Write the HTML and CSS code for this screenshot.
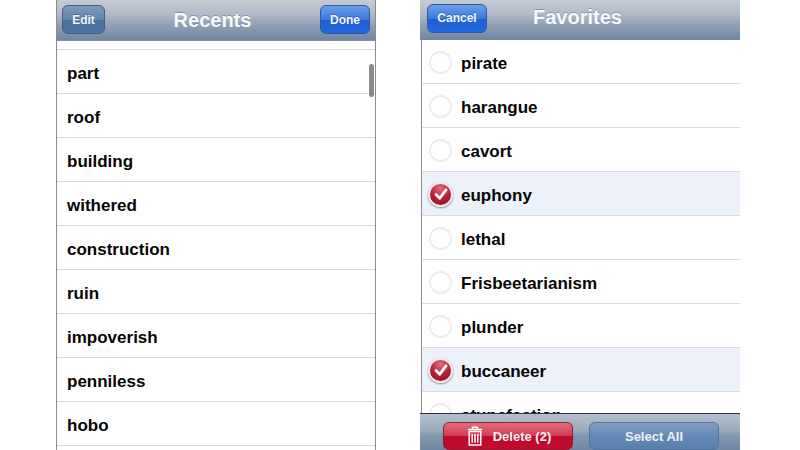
FILE: index.html
```html
<!DOCTYPE html>
<html lang="en">
<head>
<meta charset="utf-8">
<title>Recents and Favorites</title>
<link rel="stylesheet" href="styles.css">
</head>
<body>
<div class="stage">
  <section class="phone phone-left">
    <header class="nav nav-left">
      <button class="btn btn-slate btn-edit">Edit</button>
      <h1 class="title">Recents</h1>
      <button class="btn btn-blue btn-done">Done</button>
    </header>
    <div class="list list-left">
      <div class="scrollbar"></div>
      <div class="spacer"></div>
      <div class="row">part</div>
      <div class="row">roof</div>
      <div class="row">building</div>
      <div class="row">withered</div>
      <div class="row">construction</div>
      <div class="row">ruin</div>
      <div class="row">impoverish</div>
      <div class="row">penniless</div>
      <div class="row">hobo</div>
    </div>
  </section>
  <section class="phone phone-right">
    <header class="nav nav-right">
      <button class="btn btn-blue btn-cancel">Cancel</button>
      <h1 class="title title-fav">Favorites</h1>
    </header>
    <div class="list list-right">
      <div class="row row-check"><span class="radio"></span>pirate</div>
      <div class="row row-check"><span class="radio"></span>harangue</div>
      <div class="row row-check"><span class="radio"></span>cavort</div>
      <div class="row row-check row-on"><span class="radio radio-on"><svg viewBox="0 0 24 24" class="tick"><path d="M6 12.5 L10.5 17 L18 7" fill="none" stroke="#fff" stroke-width="3.4" stroke-linecap="round" stroke-linejoin="round"/></svg></span>euphony</div>
      <div class="row row-check"><span class="radio"></span>lethal</div>
      <div class="row row-check"><span class="radio"></span>Frisbeetarianism</div>
      <div class="row row-check"><span class="radio"></span>plunder</div>
      <div class="row row-check row-on"><span class="radio radio-on"><svg viewBox="0 0 24 24" class="tick"><path d="M6 12.5 L10.5 17 L18 7" fill="none" stroke="#fff" stroke-width="3.4" stroke-linecap="round" stroke-linejoin="round"/></svg></span>buccaneer</div>
      <div class="row row-check"><span class="radio"></span>stupefaction</div>
    </div>
    <footer class="toolbar">
      <button class="tool tool-delete">
        <svg class="trash" viewBox="0 0 16 20"><path d="M5.5 3 V1.2 H10.5 V3 M1 3.4 H15 M2.2 5.6 H13.8 V19 H2.2 Z M5.2 8 V16.8 M8 8 V16.8 M10.8 8 V16.8" fill="none" stroke="#fff" stroke-width="1.5"/></svg>
        <span>Delete (2)</span>
      </button>
      <button class="tool tool-select">Select All</button>
    </footer>
  </section>
</div>
</body>
</html>
```
FILE: styles.css
```css
* { box-sizing: border-box; }
html, body { margin: 0; height: 100%; background: #fff; overflow: hidden; }
body { font-family: "Liberation Sans", Arial, sans-serif; }
.stage { display: flex; height: 450px; padding-left: 56px; gap: 44px; }
.phone { display: flex; flex-direction: column; height: 450px; overflow: hidden; width: 320px; }
.phone-left { border-left: 1px solid #8d8d8d; border-right: 1px solid #8d8d8d; }
.nav {
  flex: none; display: flex; align-items: center;
  background: linear-gradient(#c6ccd4 0%, #b0bac7 35%, #92a2b6 60%, #6f87a3 100%);
}
.nav-left { height: 41px; justify-content: space-between; padding: 0 5px 1px 5px; border-bottom: 1px solid #7d8ea4; }
.nav-right { height: 40px; padding: 0 0 1px 7px; gap: 46px; }
.title { margin: 0; font-size: 20px; font-weight: bold; color: #f8f9fb; text-shadow: 0 -1px 0 rgba(107,127,151,.6); line-height: 24px; }
.title-fav { margin-top: -5px; }
.btn {
  height: 29px; padding: 0; font: bold 12px "Liberation Sans", Arial, sans-serif; color: #f2f5f9;
  border-radius: 6px; border: 1px solid #3f5f86; text-shadow: 0 -1px 0 rgba(0,0,0,.25);
}
.btn-slate { background: linear-gradient(#7f9bbc 0%, #5f83ab 50%, #4a729f 52%, #4d76a4 100%); }
.btn-blue { background: linear-gradient(#6d9fe8 0%, #3c79dc 50%, #1e60d6 52%, #2168de 100%); border-color: #2e5a9b; }
.btn-edit { width: 43px; }
.btn-done { width: 50px; }
.btn-cancel { width: 60px; margin-top: -3px; }
.list { flex: 1; min-height: 0; overflow: hidden; position: relative; background: #fff; }
.list-right { border-left: 1px solid #8d8d8d; margin-left: 1px; }
.spacer { height: 9px; border-bottom: 1px solid #d9d9d9; }
.row {
  height: 44px; flex: none; display: flex; align-items: center; padding: 4px 0 0 10px;
  font-size: 17px; font-weight: bold; color: #050505; border-bottom: 1px solid #dcdcdc;
}
.row-check { gap: 9px; padding-left: 7px; }
.row-on { background: #ecf1fa; }
.radio {
  width: 23px; height: 23px; flex: none; border-radius: 50%; border: 2px solid #eeeeee; background: #fff;
  display: flex; align-items: center; justify-content: center; margin-top: -3px;
}
.radio-on {
  width: 25px; height: 25px; margin: -3px -1px 0;
  border: 2px solid #f3e6e9; background: radial-gradient(circle at 50% 20%, #e06c7e 0%, #b62039 50%, #8a0f25 100%);
  box-shadow: 0 1px 2px rgba(60,20,30,.5);
}
.tick { width: 20px; height: 20px; }
.scrollbar { position: absolute; right: 1px; top: 23px; width: 5px; height: 33px; border-radius: 3px; background: #8a8a8a; }
.toolbar {
  flex: none; height: 37px; display: flex; align-items: flex-start; gap: 16px; padding: 8px 0 0 23px;
  border-top: 1px solid #2f3338; background: linear-gradient(#b3bfce 0%, #9cabbd 45%, #8398b0 60%, #6f88a5 100%);
}
.tool {
  width: 130px; height: 28px; flex: none; padding: 0; border-radius: 6px;
  font: bold 13px "Liberation Sans", Arial, sans-serif; color: #f0f2f6;
  display: flex; align-items: center; justify-content: center;
}
.tool-delete { gap: 10px; border: 1px solid #8d1c30; background: linear-gradient(#e0707f 0%, #d23c54 48%, #c00a2c 52%, #c20c30 100%); padding-left: 2px; }
.tool-select { border: 1px solid #55769b; background: linear-gradient(#81a0c2 0%, #648ab5 50%, #5680ae 100%); }
.trash { width: 16px; height: 20px; }
```
